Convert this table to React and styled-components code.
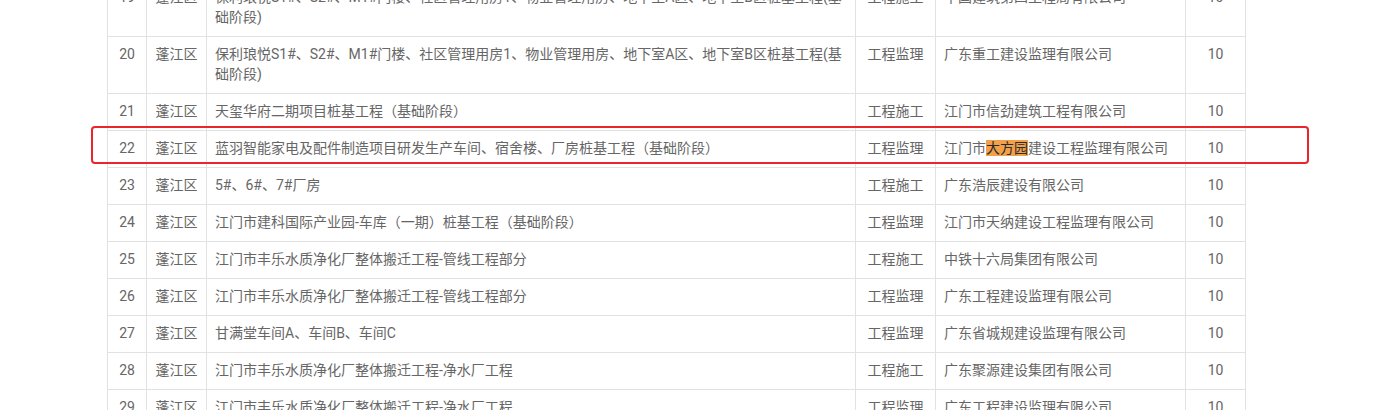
import React from "react"
import styled, { createGlobalStyle } from "styled-components"

const GlobalStyle = createGlobalStyle`
  html, body {
    margin: 0;
    padding: 0;
    background: #fff;
  }
  body {
    font-family: Roboto, "Noto Sans CJK SC", sans-serif;
    overflow: hidden;
  }
`;

const Page = styled.div`
  width: 1378px;
  height: 410px;
  overflow: hidden;
`;

const TableWrap = styled.div`
  position: relative;
  margin: -21px 0 0 107px;
  width: 1139px;
`;

const Table = styled.table`
  width: 1139px;
  table-layout: fixed;
  border-collapse: collapse;
  font-size: 14px;
  line-height: 20px;
  color: #666;
`;

const Col = styled.col`
  width: ${(props) => props.w}px;
`;

const Cell = styled.td`
  border: 1px solid #e2e2e2;
  padding: 7px 8px 9px;
  vertical-align: top;
  text-align: ${(props) => (props.center ? "center" : "left")};
  white-space: ${(props) => (props.center ? "nowrap" : "normal")};
  word-break: break-all;
`;

const Mark = styled.span`
  background: #f3a04a;
  color: #2b2b2b;
`;

const Highlight = styled.div`
  position: absolute;
  left: -16px;
  top: 147px;
  width: 1218px;
  height: 38px;
  box-sizing: border-box;
  border: 2px solid #e8262b;
  border-radius: 4px;
  pointer-events: none;
`;

const widths = [39, 60, 649, 80, 250, 60];

const rows = [
  ["19", "保利琅悦S1#、S2#、M1#门楼、社区管理用房1、物业管理用房、地下室A区、地下室B区桩基工程(基础阶段)", "工程施工", "中国建筑第四工程局有限公司"],
  ["20", "保利琅悦S1#、S2#、M1#门楼、社区管理用房1、物业管理用房、地下室A区、地下室B区桩基工程(基础阶段)", "工程监理", "广东重工建设监理有限公司"],
  ["21", "天玺华府二期项目桩基工程（基础阶段）", "工程施工", "江门市信劲建筑工程有限公司"],
  ["22", "蓝羽智能家电及配件制造项目研发生产车间、宿舍楼、厂房桩基工程（基础阶段）", "工程监理", "mark"],
  ["23", "5#、6#、7#厂房", "工程施工", "广东浩辰建设有限公司"],
  ["24", "江门市建科国际产业园-车库（一期）桩基工程（基础阶段）", "工程监理", "江门市天纳建设工程监理有限公司"],
  ["25", "江门市丰乐水质净化厂整体搬迁工程-管线工程部分", "工程施工", "中铁十六局集团有限公司"],
  ["26", "江门市丰乐水质净化厂整体搬迁工程-管线工程部分", "工程监理", "广东工程建设监理有限公司"],
  ["27", "甘满堂车间A、车间B、车间C", "工程监理", "广东省城规建设监理有限公司"],
  ["28", "江门市丰乐水质净化厂整体搬迁工程-净水厂工程", "工程施工", "广东聚源建设集团有限公司"],
  ["29", "江门市丰乐水质净化厂整体搬迁工程-净水厂工程", "工程监理", "广东工程建设监理有限公司"],
];

const App = () => {
  return (
    <>
      <GlobalStyle />
      <Page>
        <TableWrap>
          <Table>
            <colgroup>
              {widths.map((w, i) => <Col key={i} w={w} />)}
            </colgroup>
            <tbody>
              {rows.map(([no, name, type, company]) => (
                <tr key={no}>
                  <Cell center>{no}</Cell>
                  <Cell center>蓬江区</Cell>
                  <Cell>{name}</Cell>
                  <Cell center>{type}</Cell>
                  <Cell>
                    {company === "mark" ? (
                      <>江门市<Mark>大方园</Mark>建设工程监理有限公司</>
                    ) : company}
                  </Cell>
                  <Cell center>10</Cell>
                </tr>
              ))}
            </tbody>
          </Table>
          <Highlight />
        </TableWrap>
      </Page>
    </>
  );
}

export default App
